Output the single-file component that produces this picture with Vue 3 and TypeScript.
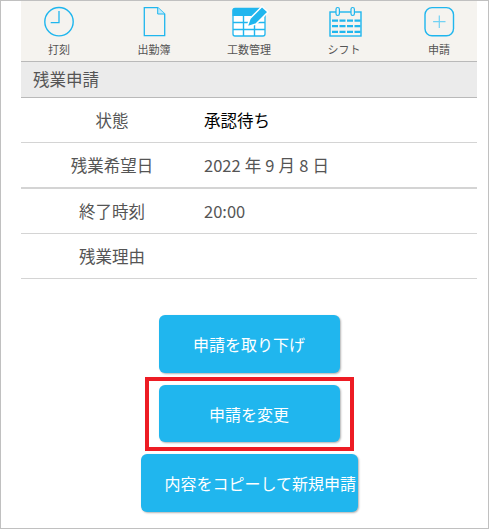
<script setup lang="ts">
const rows = [
  { label: '状態', value: '承認待ち', cls: 'dark' },
  { label: '残業希望日', value: '2022 年 9 月 8 日', cls: 'thick date' },
  { label: '終了時刻', value: '20:00', cls: '' },
  { label: '残業理由', value: '', cls: '' },
]
</script>

<template>
  <div class="frame">
    <div class="page">
      <nav class="tabs">
        <div class="tab">
          <svg width="34" height="34" viewBox="0 0 34 34" fill="none" stroke="#1fb6ee">
            <circle cx="17" cy="16.7" r="14.2" stroke-width="1.4" />
            <path d="M17 6V17.7H8.7" stroke-width="1.3" />
          </svg>
          <span>打刻</span>
        </div>
        <div class="tab">
          <svg width="34" height="34" viewBox="0 0 34 34" fill="none" stroke="#1fb6ee" stroke-width="1.3">
            <path d="M7.3 2.6H20.7L27.7 9V30.6H7.3Z" />
            <path d="M20.7 2.6V9H27.7" fill="#bfeafb" stroke-width="1" />
          </svg>
          <span>出勤簿</span>
        </div>
        <div class="tab">
          <svg width="38" height="34" viewBox="0 0 38 34">
            <rect x="3" y="3.5" width="32" height="27.5" rx="2" fill="#fff" stroke="#20b6ee" stroke-width="1.3" />
            <path d="M2.5 6a3 3 0 0 1 3-3h27a3 3 0 0 1 3 3v5H2.5Z" fill="#20b6ee" />
            <path d="M3 17.5H35M3 24.5H35M13.5 10V31M24.5 10V31" stroke="#20b6ee" stroke-width="1.4" fill="none" />
            <path d="M17 22L20 13.5L32 1.5L38 7L26 19Z" fill="#20b6ee" stroke="#fff" stroke-width="1.5" />
          </svg>
          <span>工数管理</span>
        </div>
        <div class="tab">
          <svg width="34" height="34" viewBox="0 0 34 34" fill="none" stroke="#1fb6ee">
            <rect x="3" y="7" width="31" height="24" stroke-width="1.4" />
            <rect x="9" y="2.5" width="3.4" height="8" rx="1.7" fill="#f5f3ef" stroke-width="1.2" />
            <rect x="24" y="2.5" width="3.4" height="8" rx="1.7" fill="#f5f3ef" stroke-width="1.2" />
            <path d="M5 15.7H33.5M5 21.2H33.5M5 26.8H33.5" stroke-width="2.2" stroke-dasharray="6 1.5" />
          </svg>
          <span>シフト</span>
        </div>
        <div class="tab">
          <svg width="34" height="34" viewBox="0 0 34 34" fill="none" stroke="#1fb6ee">
            <rect x="3" y="2.6" width="28.5" height="28.2" rx="7" stroke-width="1.4" />
            <path d="M17.3 10.5V23M11.1 16.7H23.5" stroke="#72d2f4" stroke-width="1.2" />
          </svg>
          <span>申請</span>
        </div>
      </nav>
      <h1 class="title">残業申請</h1>
      <div v-for="row in rows" :key="row.label" class="row" :class="row.cls">
        <div class="label">{{ row.label }}</div>
        <div class="value">{{ row.value }}</div>
      </div>
      <div class="actions">
        <button class="btn">申請を取り下げ</button>
        <button class="btn mid">申請を変更</button>
        <button class="btn wide">内容をコピーして新規申請</button>
        <div class="highlight"></div>
      </div>
    </div>
  </div>
</template>

<style scoped>
.frame {
  box-sizing: border-box;
  width: 489px;
  height: 529px;
  border: 1px solid #c0c0c0;
  padding-left: 20px;
  overflow: hidden;
  background: #fff;
  font-family: "Noto Sans CJK JP", "Liberation Sans", sans-serif;
  color: #555;
}
.page { width: 456px; }
.tabs {
  display: flex;
  justify-content: space-between;
  height: 60px;
  background: #f5f3ef;
  border-bottom: 1px solid #b9b9b9;
}
.tab {
  width: 76px;
  display: flex;
  flex-direction: column;
  align-items: center;
  font-size: 11px;
  line-height: 16px;
  color: #555;
}
.tab svg { display: block; margin-top: 4px; margin-bottom: 2px; overflow: visible; }
.title {
  margin: 0;
  height: 35px;
  padding-left: 12px;
  background: #ebebeb;
  border-bottom: 1px solid #b9b9b9;
  font-size: 16.5px;
  font-weight: 400;
  line-height: 35px;
  color: #555;
}
.row {
  display: flex;
  align-items: center;
  height: 44px;
  border-bottom: 1px solid #d4d4d4;
  font-size: 16.5px;
}
.row.thick { border-bottom-width: 2px; }
.label { width: 182px; text-align: center; }
.value { margin-left: 1px; }
.dark .value { color: #000; }
.date .value { word-spacing: 0.4px; }
.actions {
  position: relative;
  display: flex;
  flex-direction: column;
  align-items: center;
  gap: 12px;
  padding-top: 36px;
}
.btn {
  width: 181px;
  height: 58px;
  padding: 0;
  border: 0;
  border-radius: 6px;
  background: #20b6ee;
  box-shadow: 1px 1px 2px rgba(0, 0, 0, 0.3);
  color: #fff;
  font: inherit;
  font-size: 16px;
}
.btn.mid { height: 57px; }
.btn.wide {
  width: 217px;
  padding-left: 24px;
  text-align: left;
  white-space: nowrap;
}
.highlight {
  position: absolute;
  left: 124px;
  top: 98px;
  width: 209px;
  height: 74px;
  box-sizing: border-box;
  border: 4px solid #ed1c24;
}
</style>

<style>
html, body { margin: 0; background: #fff; }
</style>
